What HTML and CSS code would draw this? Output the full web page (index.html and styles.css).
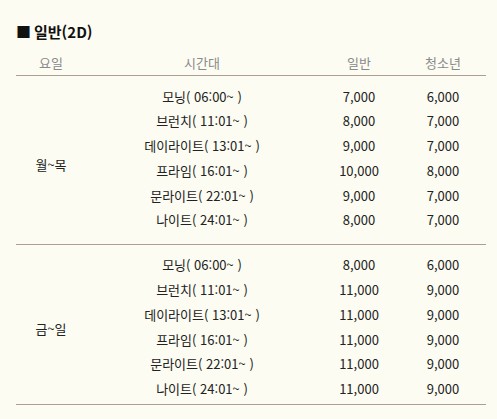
FILE: index.html
```html
<!DOCTYPE html>
<html lang="ko">
<head>
<meta charset="utf-8">
<link rel="stylesheet" href="styles.css">
</head>
<body>
<div class="page">
  <h2 class="title"><span class="sq">■</span>일반(2D)</h2>
  <div class="table">
    <div class="head">
      <div>요일</div><div>시간대</div><div>일반</div><div>청소년</div>
    </div>
    <div class="group g1">
      <div class="day">월~목</div>
      <div class="rows">
        <div class="row"><div>모닝( 06:00~ )</div><div>7,000</div><div>6,000</div></div>
        <div class="row"><div>브런치( 11:01~ )</div><div>8,000</div><div>7,000</div></div>
        <div class="row"><div>데이라이트( 13:01~ )</div><div>9,000</div><div>7,000</div></div>
        <div class="row"><div>프라임( 16:01~ )</div><div>10,000</div><div>8,000</div></div>
        <div class="row"><div>문라이트( 22:01~ )</div><div>9,000</div><div>7,000</div></div>
        <div class="row"><div>나이트( 24:01~ )</div><div>8,000</div><div>7,000</div></div>
      </div>
    </div>
    <div class="group g2">
      <div class="day">금~일</div>
      <div class="rows">
        <div class="row"><div>모닝( 06:00~ )</div><div>8,000</div><div>6,000</div></div>
        <div class="row"><div>브런치( 11:01~ )</div><div>11,000</div><div>9,000</div></div>
        <div class="row"><div>데이라이트( 13:01~ )</div><div>11,000</div><div>9,000</div></div>
        <div class="row"><div>프라임( 16:01~ )</div><div>11,000</div><div>9,000</div></div>
        <div class="row"><div>문라이트( 22:01~ )</div><div>11,000</div><div>9,000</div></div>
        <div class="row"><div>나이트( 24:01~ )</div><div>11,000</div><div>9,000</div></div>
      </div>
    </div>
  </div>
</div>
</body>
</html>
```

FILE: styles.css
```css
html, body {
  margin: 0;
  padding: 0;
  background: #fcfcf2;
}
body {
  font-family: "Noto Sans CJK KR", "Noto Sans", sans-serif;
  font-size: 13px;
  color: #222;
}
.page {
  padding: 22px 11px 0 16px;
}
.title {
  margin: 0;
  font-size: 15px;
  font-weight: bold;
  line-height: 20px;
  color: #111;
  display: flex;
  align-items: center;
}
.sq {
  font-size: 15px;
  margin-right: 3px;
}
.table {
  width: 470px;
  margin-top: 9px;
}
.head {
  display: grid;
  grid-template-columns: 70px 232px 82px 86px;
  text-align: center;
  color: #8a8a8a;
  line-height: 24px;
  border-bottom: 1px solid #ad9e94;
}
.group {
  display: grid;
  grid-template-columns: 70px 400px;
  padding-top: 8.5px;
  border-bottom: 1px solid #ad9e94;
}
.day {
  display: flex;
  align-items: center;
  justify-content: center;
}
.g1 .rows { padding-bottom: 10.5px; }
.g2 .rows { padding-bottom: 2px; }
.row {
  display: grid;
  grid-template-columns: 232px 82px 86px;
  text-align: center;
  height: 24.8px;
  line-height: 24.8px;
}
```
